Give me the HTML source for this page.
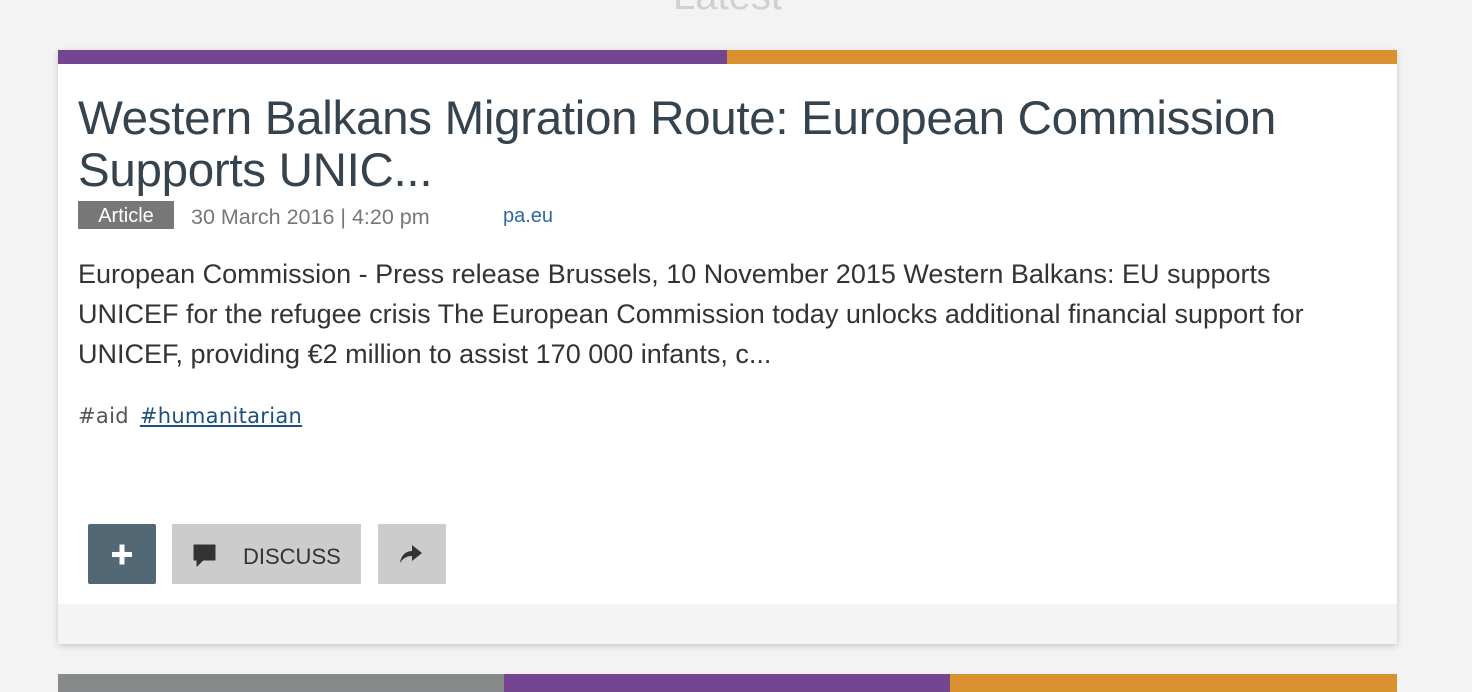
<!DOCTYPE html>
<html><head><style>
body{margin:0;width:1472px;height:692px;background:#f3f3f3;font-family:"Liberation Sans",sans-serif;overflow:hidden;position:relative}
.latest{position:absolute;top:-26px;left:0;width:1455px;text-align:center;font-size:40px;color:#d0d0d0}
.card{position:absolute;left:58px;top:50px;width:1339px;height:594px;background:#fff;box-shadow:0 2px 6px rgba(0,0,0,.18)}
.bar{position:absolute;left:0;top:0;height:14px}
.foot{position:absolute;left:0;top:554px;width:1339px;height:40px;background:#f4f4f4}
.title{position:absolute;left:20px;top:43px;font-size:47.5px;line-height:52px;color:#34434d;white-space:nowrap;letter-spacing:-0.3px}
.tag{position:absolute;left:20px;top:151px;width:96px;height:28px;background:#777;color:#fff;font-size:20px;line-height:30px;text-align:center}
.date{position:absolute;left:133px;top:155px;font-size:21.5px;color:#777}
.src{position:absolute;left:445px;top:155px;font-size:20px;color:#2b6aa3}
.body{position:absolute;left:20px;top:204px;font-size:27px;line-height:40px;color:#333;white-space:nowrap}
.tags{position:absolute;left:20px;top:354px;font-size:21px;color:#555;letter-spacing:0.3px;font-family:"DejaVu Sans",sans-serif}
.tags u{color:#1f4f7a;margin-left:4px}
.btn{position:absolute;top:474px;height:60px;background:#ccc}
</style></head><body>
<div class="latest">Latest</div>
<div class="card">
<div class="bar" style="width:669px;background:#74468f"></div>
<div class="bar" style="left:669px;width:670px;background:#da9230"></div>
<div class="title">Western Balkans Migration Route: European Commission<br>Supports UNIC...</div>
<div class="tag">Article</div>
<div class="date">30 March 2016 | 4:20 pm</div>
<div class="src">pa.eu</div>
<div class="body">European Commission - Press release Brussels, 10 November 2015 Western Balkans: EU supports<br>UNICEF for the refugee crisis The European Commission today unlocks additional financial support for<br>UNICEF, providing €2 million to assist 170 000 infants, c...</div>
<div class="tags">#aid <u>#humanitarian</u></div>
<div class="btn" style="left:30px;width:68px;background:#526875;border-radius:2px">
<svg width="68" height="60"><rect x="24" y="28" width="20" height="5" fill="#fff"/><rect x="31.5" y="20.5" width="5" height="20" fill="#fff"/></svg></div>
<div class="btn" style="left:114px;width:189px">
<svg width="40" height="60" style="position:absolute;left:18px;top:0"><path d="M4 21h21v15H13l-6 6v-6H4z" fill="#333" stroke="#333" stroke-width="1" stroke-linejoin="round"/></svg>
<span style="position:absolute;left:71px;top:20px;font-size:22px;color:#333">DISCUSS</span></div>
<div class="btn" style="left:320px;width:68px">
<svg width="68" height="60"><path d="M22 39c1-8 6-12 12-12v-6l10 8-10 8v-5c-5 0-9 2-12 7z" fill="#333"/></svg></div>
<div class="foot"></div>
</div>
<div class="bar" style="position:absolute;left:58px;top:674px;width:446px;background:#868a8a;height:18px"></div>
<div class="bar" style="position:absolute;left:504px;top:674px;width:446px;background:#74468f;height:18px"></div>
<div class="bar" style="position:absolute;left:950px;top:674px;width:447px;background:#da9230;height:18px"></div>
</body></html>
